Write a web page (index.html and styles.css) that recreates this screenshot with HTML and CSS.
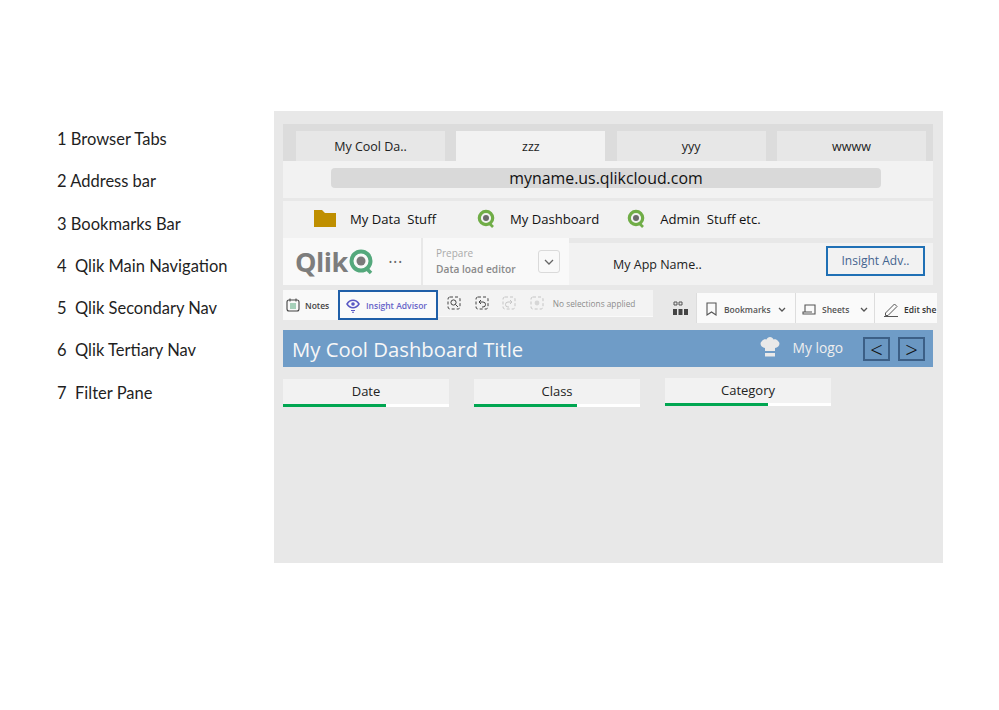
FILE: index.html
```html
<!DOCTYPE html>
<html>
<head>
  <title>Qlik layout notes</title>
  <link rel="stylesheet" href="styles.css">
</head>
<body>
  <ul class="legend">
    <li>1 Browser Tabs</li>
    <li>2 Address bar</li>
    <li>3 Bookmarks Bar</li>
    <li>4&nbsp; Qlik Main Navigation</li>
    <li>5&nbsp; Qlik Secondary Nav</li>
    <li>6&nbsp; Qlik Tertiary Nav</li>
    <li>7&nbsp; Filter Pane</li>
  </ul>

  <div class="mock">
    <div class="tabs">
      <div class="tab">My Cool Da..</div>
      <div class="tab active">zzz</div>
      <div class="tab">yyy</div>
      <div class="tab">wwww</div>
    </div>

    <div class="address-row">
      <div class="address">myname.us.qlikcloud.com</div>
    </div>

    <div class="bookmarks">
      <div class="bookmark first">
        <svg class="folder" width="22" height="17" viewBox="0 0 22 17"><path d="M0 0h8l3 3h11v14H0z" fill="#bf8f00"/></svg>
        <span>My Data&nbsp; Stuff</span>
      </div>
      <div class="bookmark second">
        <svg width="19" height="19" viewBox="0 0 19 19"><circle cx="9" cy="9" r="6.7" fill="none" stroke="#70ad47" stroke-width="3.2"/><circle cx="9" cy="9" r="3" fill="#6b6b6b"/><path d="M12 14l4 4" stroke="#70ad47" stroke-width="2.6"/></svg>
        <span>My Dashboard</span>
      </div>
      <div class="bookmark third">
        <svg width="19" height="19" viewBox="0 0 19 19"><circle cx="9" cy="9" r="6.7" fill="none" stroke="#70ad47" stroke-width="3.2"/><circle cx="9" cy="9" r="3" fill="#6b6b6b"/><path d="M12 14l4 4" stroke="#70ad47" stroke-width="2.6"/></svg>
        <span>Admin&nbsp; Stuff etc.</span>
      </div>
    </div>

    <div class="main-nav">
      <div class="logo-box">
        <span class="qlik-word">Qlik</span>
        <svg width="26" height="26" viewBox="0 0 26 26"><circle cx="12" cy="12" r="9.5" fill="none" stroke="#54a87c" stroke-width="4"/><circle cx="12" cy="12" r="4.5" fill="#7a7a7a"/><path d="M17 19l5 5" stroke="#54a87c" stroke-width="3.6"/></svg>
        <span class="dots">•••</span>
      </div>
      <div class="prepare">
        <div class="prepare-text">
          <div class="prepare-top">Prepare</div>
          <div class="prepare-sub">Data load editor</div>
        </div>
        <div class="prepare-btn">
          <svg width="10" height="6" viewBox="0 0 10 6"><path d="M1 1l4 4 4-4" fill="none" stroke="#666" stroke-width="1.3"/></svg>
        </div>
      </div>
      <div class="app-row">
        <span class="app-name">My App Name..</span>
        <div class="insight-outline">Insight Adv..</div>
      </div>
    </div>

    <div class="second-nav">
      <div class="notes">
        <svg width="14" height="14" viewBox="0 0 14 14"><rect x="1" y="2" width="12" height="11" rx="2" fill="none" stroke="#444" stroke-width="1.1"/><path d="M4 0.5v3M10 0.5v3" stroke="#444"/><path d="M4 6h6M4 8h6M4 10h6" stroke="#52a77a"/></svg>
        <span>Notes</span>
      </div>
      <div class="advisor">
        <svg width="14" height="15" viewBox="0 0 14 15"><path d="M1 6c3-5 9-5 12 0-3 5-9 5-12 0z" fill="none" stroke="#5a58c4" stroke-width="1.5"/><circle cx="7" cy="6" r="1.8" fill="#5a58c4"/><path d="M5 12.5h4M6 14.2h2" stroke="#5a58c4" stroke-width="1.1"/></svg>
        <span>Insight Advisor</span>
      </div>
      <div class="selections">
        <svg width="14" height="14" viewBox="0 0 14 14"><rect x="1" y="1" width="12" height="12" rx="2" class="dash"/><circle cx="6.500" cy="6.500" r="2.600" fill="none" stroke="#444"/><path d="M8.500 8.500l2.500 2.500" stroke="#444"/></svg>
        <svg class="tool" width="14" height="14" viewBox="0 0 14 14"><rect x="1" y="1" width="12" height="12" rx="2" class="dash"/><path d="M4 6h4a2.500 2.500 0 0 1 0 5H7M6 4L4 6l2 2" fill="none" stroke="#444"/></svg>
        <svg class="tool faded" width="14" height="14" viewBox="0 0 14 14"><rect x="1" y="1" width="12" height="12" rx="2" class="dash"/><path d="M10 6H6a2.500 2.500 0 0 0 0 5h1M8 4l2 2-2 2" fill="none" stroke="#444"/></svg>
        <svg class="tool faded" width="14" height="14" viewBox="0 0 14 14"><rect x="1" y="1" width="12" height="12" rx="2" class="dash"/><circle cx="7" cy="7" r="2.400" fill="#888"/></svg>
        <span class="no-sel">No selections applied</span>
      </div>
      <div class="grid-icon">
        <svg width="15" height="15" viewBox="0 0 15 15"><path d="M1 1h3v3H1zM6 1h3v3H6z" fill="none" stroke="#555"/><path d="M0 8h4v6H0zM5.500 8h4v6h-4zM11 8h4v6h-4z" fill="#444"/></svg>
      </div>
      <div class="toolbar">
        <div class="tool-item bookmarks-item">
          <svg width="11" height="14" viewBox="0 0 11 14"><path d="M1 1h9v12l-4.500-3L1 13z" fill="none" stroke="#555" stroke-width="1.100"/></svg>
          <span>Bookmarks</span>
          <svg class="chev" width="8" height="5" viewBox="0 0 8 5"><path d="M1 1l3 3 3-3" fill="none" stroke="#555" stroke-width="1.300"/></svg>
        </div>
        <div class="tool-item sheets-item">
          <svg width="14" height="11" viewBox="0 0 14 11"><path d="M3 8V1h10v9H1V8h9" fill="none" stroke="#555" stroke-width="1.100"/></svg>
          <span>Sheets</span>
          <svg class="chev" width="8" height="5" viewBox="0 0 8 5"><path d="M1 1l3 3 3-3" fill="none" stroke="#555" stroke-width="1.300"/></svg>
        </div>
        <div class="tool-item edit-item">
          <svg width="15" height="15" viewBox="0 0 15 15"><path d="M1.500 11L10.500 2l2.500 2.500-9 9H1.500zM0 14.500h14" fill="none" stroke="#555"/></svg>
          <span>Edit she</span>
        </div>
      </div>
    </div>

    <div class="title-bar">
      <span class="title">My Cool Dashboard Title</span>
      <svg class="chef" width="20" height="22" viewBox="0 0 20 22"><path d="M5 15V12C1 11.500-1 7.500 2 5 3 3.500 5 3 6.500 3.500 7.500 0 12.500 0 13.500 3.500 15 3 17 3.500 18 5 21 7.500 19 11.500 15 12V15z" fill="#e9e9e9"/><path d="M5 17h10v3.500H5z" fill="#e9e9e9"/></svg>
      <span class="my-logo">My logo</span>
      <div class="arrow">&lt;</div>
      <div class="arrow">&gt;</div>
    </div>

    <div class="filters">
      <div class="filter"><div class="filter-name">Date</div><div class="filter-bar"><div class="filter-fill"></div></div></div>
      <div class="filter"><div class="filter-name">Class</div><div class="filter-bar"><div class="filter-fill"></div></div></div>
      <div class="filter raised"><div class="filter-name">Category</div><div class="filter-bar"><div class="filter-fill"></div></div></div>
    </div>
  </div>
</body>
</html>
```

FILE: styles.css
```css
body {
  margin: 0;
  height: 710px;
  padding: 111px 0 0 57px;
  box-sizing: border-box;
  display: flex;
  background: #fff;
  overflow: hidden;
  font-family: "Open Sans", sans-serif;
  color: #222;
}

.legend {
  list-style: none;
  margin: 0;
  padding: 16px 0 0;
  width: 217px;
  font-family: Lato, sans-serif;
  font-size: 16.500px;
  color: #1f1f1f;
}

.legend li {
  height: 42.300px;
  line-height: 24px;
}

.mock {
  width: 669px;
  height: 452px;
  background: #e8e8e8;
  padding: 13px 0 0 9px;
  box-sizing: border-box;
}

.tabs {
  width: 650px;
  height: 37px;
  box-sizing: border-box;
  padding: 7px 7px 0 13px;
  background: #dcdcdc;
  display: flex;
  justify-content: space-between;
}

.tab {
  width: 149px;
  background: #e7e7e7;
  text-align: center;
  font-size: 12.500px;
  line-height: 31px;
}

.tab.active {
  background: #f2f2f2;
}

.address-row {
  width: 650px;
  height: 37px;
  background: #f2f2f2;
  padding: 7px 0 0 48px;
  box-sizing: border-box;
}

.address {
  width: 550px;
  height: 20px;
  border-radius: 4px;
  background: #d9d9d9;
  text-align: center;
  font-size: 15.900px;
  line-height: 20px;
  color: #111;
}

.bookmarks {
  width: 650px;
  height: 37px;
  margin-top: 3px;
  padding-bottom: 2px;
  box-sizing: border-box;
  background: #f2f2f2;
  display: flex;
  align-items: center;
  font-size: 13.100px;
  color: #111;
}

.bookmark {
  display: flex;
  align-items: center;
}

.bookmark.first {
  margin-left: 31px;
  gap: 14px;
}

.bookmark.second {
  margin-left: 41px;
  gap: 14px;
}

.bookmark.third {
  margin-left: 28px;
  gap: 14px;
}

.main-nav {
  width: 650px;
  height: 47px;
  display: flex;
  font-size: 12px;
}

.logo-box {
  width: 138px;
  background: #f9f9f9;
  display: flex;
  align-items: center;
  padding-left: 12px;
  box-sizing: border-box;
}

.qlik-word {
  font-family: "Open Sans", sans-serif;
  font-weight: 700;
  font-size: 27px;
  letter-spacing: -0.500px;
  color: #7d7d7d;
  margin-right: 1px;
}

.dots {
  font-size: 9px;
  letter-spacing: 1.500px;
  color: #666;
  margin-left: 14px;
}

.prepare {
  width: 146px;
  margin-left: 2px;
  background: #f9f9f9;
  display: flex;
  align-items: center;
  justify-content: space-between;
  padding: 0 9px 0 13px;
  box-sizing: border-box;
}

.prepare-text {
  margin-bottom: 2px;
}

.prepare-top {
  font-size: 10px;
  color: #aaa;
  line-height: 16px;
}

.prepare-sub {
  font-size: 10.200px;
  font-weight: 600;
  color: #8a8a8a;
  line-height: 16px;
}

.prepare-btn {
  width: 22px;
  height: 23px;
  border: 1px solid #dadada;
  border-radius: 3px;
  display: flex;
  align-items: center;
  justify-content: center;
  box-sizing: border-box;
}

.app-row {
  flex: 1;
  margin-top: 5px;
  background: #f2f2f2;
  display: flex;
  align-items: center;
  justify-content: space-between;
  padding: 0 8px 0 44px;
  font-size: 12.500px;
}

.insight-outline {
  width: 99px;
  height: 30px;
  margin-bottom: 6px;
  box-sizing: border-box;
  border: 2px solid #1f70b5;
  text-align: center;
  line-height: 26px;
  color: #44648f;
  font-size: 12px;
}

.second-nav {
  width: 654px;
  height: 36px;
  margin-top: 5px;
  display: flex;
  font-size: 8.500px;
  font-weight: 600;
  overflow: hidden;
}

.notes {
  flex: none;
  width: 55px;
  height: 30px;
  background: #f9f9f9;
  display: flex;
  align-items: center;
  gap: 5px;
  padding-left: 3px;
  box-sizing: border-box;
  color: #444;
}

.advisor {
  flex: none;
  width: 100px;
  height: 30px;
  box-sizing: border-box;
  border: 2px solid #1f5fa8;
  background: #fafafa;
  display: flex;
  align-items: center;
  gap: 6px;
  padding-left: 6px;
  color: #6664c8;
}

.selections {
  flex: none;
  width: 215px;
  height: 27px;
  background: #f3f3f3;
  border-bottom: 1px solid #fafafa;
  box-sizing: border-box;
  display: flex;
  align-items: center;
  padding-left: 9px;
}

.dash {
  fill: none;
  stroke: #444;
  stroke-dasharray: 3 2;
}

.tool {
  margin-left: 13.600px;
}

.faded {
  opacity: 0.25;
}

.no-sel {
  margin-left: 9px;
  font-size: 8.300px;
  font-weight: 400;
  color: #8c8c8c;
}

.grid-icon {
  flex: none;
  width: 43px;
  height: 36px;
  padding: 0 0 0 12px;
  box-sizing: border-box;
  display: flex;
  align-items: center;
  justify-content: center;
}

.toolbar {
  flex: 1;
  height: 30px;
  margin-top: 3px;
  background: #fafafa;
  display: flex;
  color: #555;
}

.tool-item {
  display: flex;
  align-items: center;
  flex: none;
  padding-top: 2px;
  border-left: 1px solid #ddd;
  box-sizing: border-box;
  white-space: nowrap;
}

.bookmarks-item {
  width: 99px;
  padding-left: 9px;
  gap: 7px;
}

.sheets-item {
  width: 79px;
  padding-left: 6px;
  gap: 6px;
}

.sheets-item .chev {
  margin-left: 5px;
}

.edit-item {
  padding-left: 9px;
  gap: 5px;
  color: #333;
}

.title-bar {
  width: 650px;
  height: 37px;
  margin-top: 4px;
  background: #6f9cc7;
  display: flex;
  align-items: center;
  color: #fff;
}

.title {
  margin-left: 9px;
  font-size: 20.300px;
  flex: 1;
  color: #f7f7f7;
}

.chef {
  margin: 0 13px 4px 0;
}

.my-logo {
  font-size: 13.800px;
  color: #eee;
  margin: 0 20px 3px 0;
}

.arrow {
  width: 27px;
  height: 24px;
  box-sizing: border-box;
  border: 2px solid #3c5f86;
  background: #6a97c2;
  color: #111;
  text-align: center;
  font-size: 22px;
  font-weight: 300;
  line-height: 20px;
  margin-right: 8px;
}

.filters {
  display: flex;
  gap: 25px;
  margin-top: 12px;
}

.filter {
  width: 166px;
}

.filter.raised {
  margin-top: -1px;
}

.filter-name {
  height: 25px;
  background: #f2f2f2;
  text-align: center;
  font-size: 13px;
  line-height: 25px;
  color: #222;
}

.filter-bar {
  height: 3px;
  background: #fff;
}

.filter-fill {
  width: 62%;
  height: 100%;
  background: #00a651;
}
```
